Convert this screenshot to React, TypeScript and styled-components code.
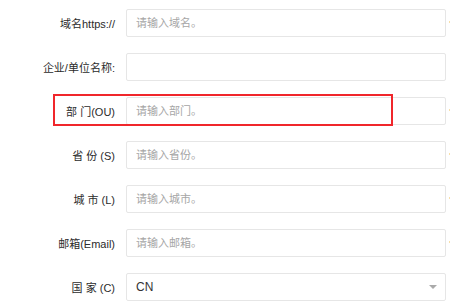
import styled, { createGlobalStyle } from "styled-components";

const GlobalStyle = createGlobalStyle`
    html, body {
        margin: 0;
        padding: 0;
        background: #fff;
        overflow: hidden;
    }
    body {
        font-family: "Liberation Sans", "Noto Sans CJK SC", sans-serif;
    }
`;

const Form = styled.div`
    position: relative;
    display: flex;
    flex-direction: column;
    gap: 16px;
    padding-top: 9px;
    width: 470px;
`;

const Row = styled.div`
    display: flex;
    align-items: center;
    height: 28px;
`;

const Label = styled.label`
    width: 115px;
    margin-right: 11px;
    text-align: right;
    font-size: 11px;
    color: #2b2b2b;
    white-space: nowrap;
`;

const Field = styled.div`
    position: relative;
    box-sizing: border-box;
    width: 320px;
    height: 28px;
    border: 1px solid #e6e6e6;
    border-radius: 2px;
    display: flex;
    align-items: center;
    padding-left: 9px;
`;

const Input = styled.input`
    border: none;
    outline: none;
    padding: 0;
    width: 100%;
    font-family: "Liberation Sans", "Noto Sans CJK SC", sans-serif;
    font-size: 11px;
    color: #333;
    background: transparent;

    &::placeholder {
        color: #a6a6a6;
    }
`;

const Value = styled.span`
    font-size: 12px;
    color: #333;
`;

const Caret = styled.span`
    position: absolute;
    right: 8px;
    top: 50%;
    margin-top: -2px;
    width: 0;
    height: 0;
    border-left: 4px solid transparent;
    border-right: 4px solid transparent;
    border-top: 4px solid #aaa;
`;

/* required marker, only its left edge shows inside the window */
const Required = styled.span<{ $show: boolean }>`
    margin-left: 3px;
    margin-top: -2px;
    width: 4px;
    height: 2px;
    background: #f9dfa8;
    visibility: ${(p) => (p.$show ? "visible" : "hidden")};
`;

const Highlight = styled.div`
    position: absolute;
    left: 53px;
    top: 94px;
    width: 340px;
    height: 32px;
    box-sizing: border-box;
    border: 2px solid #f0262b;
    pointer-events: none;
`;

const fields = [
    { label: "域名https://", placeholder: "请输入域名。", required: true },
    { label: "企业/单位名称:", placeholder: "", required: false },
    { label: "部 门(OU)", placeholder: "请输入部门。", required: true },
    { label: "省 份 (S)", placeholder: "请输入省份。", required: true },
    { label: "城 市 (L)", placeholder: "请输入城市。", required: true },
    { label: "邮箱(Email)", placeholder: "请输入邮箱。", required: true },
];

export default function App() {
    return (
        <>
            <GlobalStyle />
            <Form>
                {fields.map((f) => (
                    <Row key={f.label}>
                        <Label>{f.label}</Label>
                        <Field>
                            <Input placeholder={f.placeholder} />
                        </Field>
                        <Required $show={f.required} />
                    </Row>
                ))}
                <Row>
                    <Label>国 家 (C)</Label>
                    <Field>
                        <Value>CN</Value>
                        <Caret />
                    </Field>
                </Row>
                <Highlight />
            </Form>
        </>
    );
}
